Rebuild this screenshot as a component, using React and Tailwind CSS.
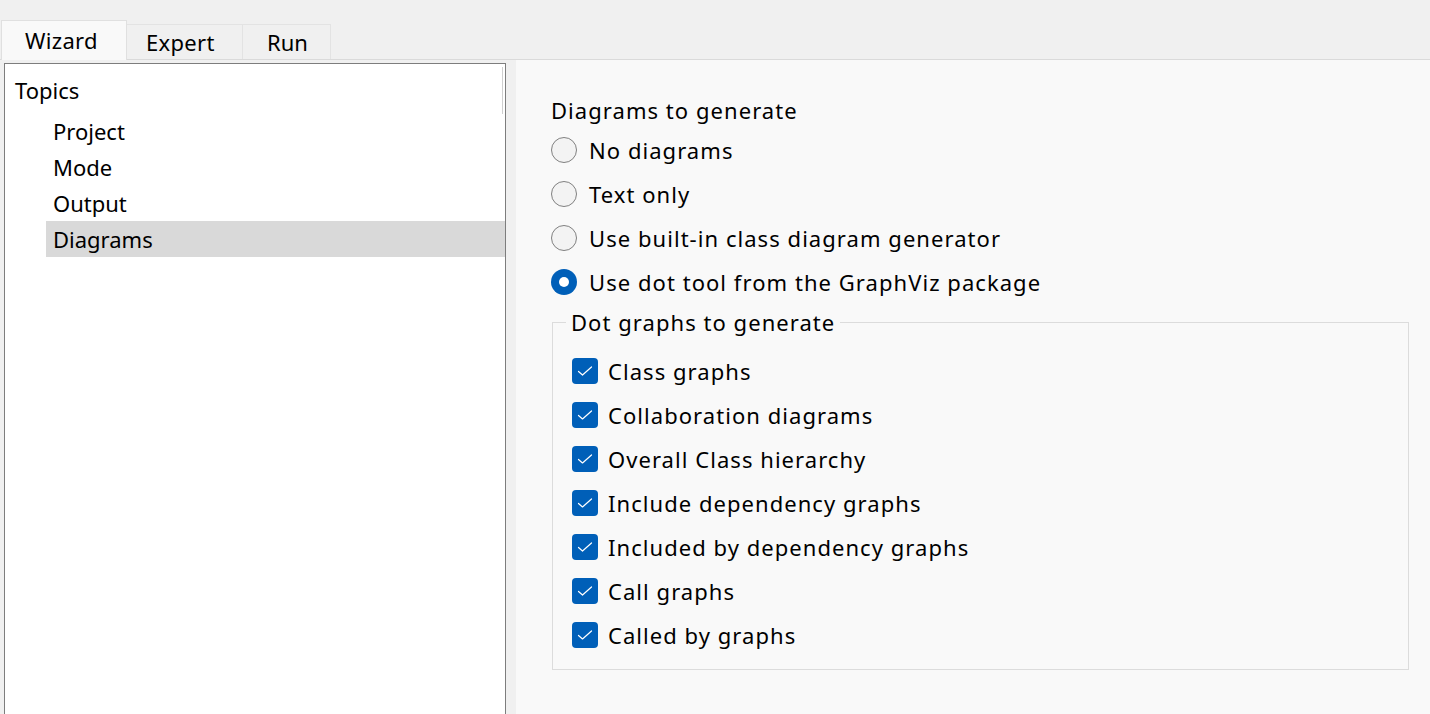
import React from "react"

const topics = ["Project", "Mode", "Output", "Diagrams"]

const radios = [
  { label: "No diagrams", checked: false },
  { label: "Text only", checked: false },
  { label: "Use built-in class diagram generator", checked: false },
  { label: "Use dot tool from the GraphViz package", checked: true },
]

const graphs = [
  "Class graphs",
  "Collaboration diagrams",
  "Overall Class hierarchy",
  "Include dependency graphs",
  "Included by dependency graphs",
  "Call graphs",
  "Called by graphs",
]

function Radio({ label, checked }) {
  return (
    <div className="flex h-[44px] items-center gap-[12px]">
      {checked ? (
        <span className="flex h-[26px] w-[26px] items-center justify-center rounded-full bg-[#005fb8]">
          <span className="h-[10px] w-[10px] rounded-full bg-white" />
        </span>
      ) : (
        <span className="h-[26px] w-[26px] rounded-full border-[1.5px] border-[#808080] bg-[#f3f3f3]" />
      )}
      <span>{label}</span>
    </div>
  )
}

function Check({ label }) {
  return (
    <div className="flex h-[44px] items-center gap-[10px]">
      <span className="flex h-[26px] w-[26px] items-center justify-center rounded-[4px] bg-[#005fb8]">
        <svg width="16" height="16" viewBox="0 0 16 16" fill="none">
          <path
            d="M1.5 8.5 L5.5 12 L14.5 4"
            stroke="white"
            strokeWidth="1.2"
            strokeLinecap="round"
            strokeLinejoin="round"
          />
        </svg>
      </span>
      <span>{label}</span>
    </div>
  )
}

export default function App() {
  return (
    <div className="flex h-[714px] w-[1430px] flex-col overflow-hidden bg-[#f0f0f0] font-['Noto_Sans',sans-serif] text-[22px] text-black">
      {/* tab strip */}
      <div className="flex h-[60px] shrink-0 items-end border-b border-[#dadada] pl-[1px]">
        <div className="relative -mb-[1px] flex h-[40px] w-[126px] items-center border border-b-0 border-[#e0e0e0] bg-[#f9f9f9] pl-[23px] tracking-[0.3px]">
          Wizard
        </div>
        <div className="flex h-[35px] w-[116px] items-center border border-b-0 border-l-0 border-[#e3e3e3] pl-[19px] pt-[1px] tracking-[0.3px]">
          Expert
        </div>
        <div className="flex h-[35px] w-[88px] items-center border border-b-0 border-l-0 border-[#e3e3e3] pl-[24px] pt-[1px]">
          Run
        </div>
      </div>

      <div className="flex min-h-0 flex-1">
        {/* topics tree */}
        <div className="relative ml-[4px] mt-[3px] w-[502px] shrink-0 border border-b-0 border-[#7d7d7d] bg-white pt-[8px]">
          <div className="absolute right-[2px] top-[3px] h-[47px] w-[1px] bg-[#cfcfcf]" />
          <div className="flex h-[36px] items-center pl-[10px]">Topics</div>
          <div className="mt-[5px]">
            {topics.map((t) => (
              <div
                key={t}
                className={`ml-[41px] flex h-[36px] items-center pl-[7px] ${
                  t === "Diagrams" ? "bg-[#d9d9d9]" : ""
                }`}
              >
                {t}
              </div>
            ))}
          </div>
        </div>

        {/* splitter */}
        <div className="w-[10px] shrink-0" />

        {/* settings */}
        <div className="flex-1 bg-[#f9f9f9] pl-[35px] pr-[21px] pt-[32px] tracking-[1.05px]">
          <div className="flex h-[36px] items-center">Diagrams to generate</div>
          {radios.map((r) => (
            <Radio key={r.label} {...r} />
          ))}
          <fieldset className="ml-[1px] mt-[3px] border border-[#dcdcdc] pb-[12px] pl-[19px]">
            <legend className="ml-[-6px] px-[5px] leading-[30px]">Dot graphs to generate</legend>
            <div className="pt-[12px]">
              {graphs.map((g) => (
                <Check key={g} label={g} />
              ))}
            </div>
          </fieldset>
        </div>
      </div>
    </div>
  )
}
